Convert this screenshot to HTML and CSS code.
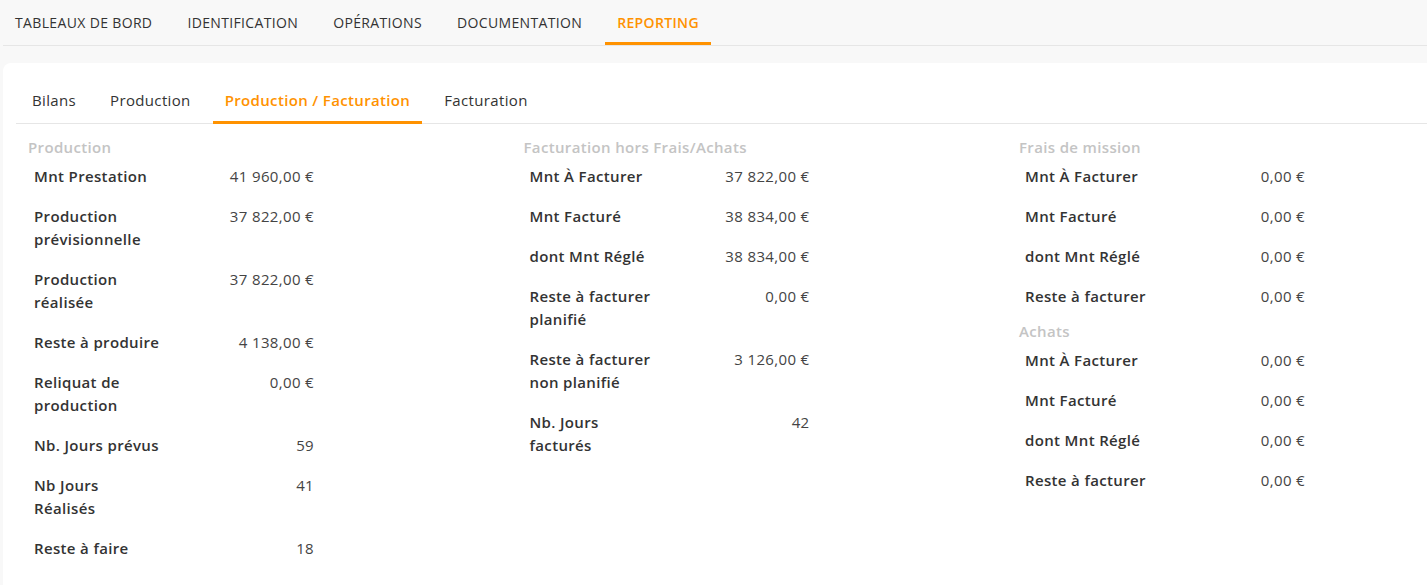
FILE: index.html
```html
<!DOCTYPE html>
<html lang="fr">
<head>
<meta charset="utf-8">
<title>Reporting</title>
<link rel="stylesheet" href="styles.css">
</head>
<body>
<nav class="topnav">
  <a class="topnav-item">TABLEAUX DE BORD</a>
  <a class="topnav-item">IDENTIFICATION</a>
  <a class="topnav-item">OPÉRATIONS</a>
  <a class="topnav-item">DOCUMENTATION</a>
  <a class="topnav-item active">REPORTING</a>
</nav>
<main class="card">
  <div class="tabs">
    <a class="tab">Bilans</a>
    <a class="tab">Production</a>
    <a class="tab active">Production / Facturation</a>
    <a class="tab">Facturation</a>
  </div>
  <div class="columns">
    <section class="col">
      <h3 class="col-title">Production</h3>
      <div class="row"><span class="label">Mnt Prestation</span><span class="value">41 960,00 €</span></div>
      <div class="row"><span class="label">Production prévisionnelle</span><span class="value">37 822,00 €</span></div>
      <div class="row"><span class="label">Production réalisée</span><span class="value">37 822,00 €</span></div>
      <div class="row"><span class="label">Reste à produire</span><span class="value">4 138,00 €</span></div>
      <div class="row"><span class="label">Reliquat de production</span><span class="value">0,00 €</span></div>
      <div class="row"><span class="label">Nb. Jours prévus</span><span class="value">59</span></div>
      <div class="row"><span class="label">Nb Jours Réalisés</span><span class="value">41</span></div>
      <div class="row"><span class="label">Reste à faire</span><span class="value">18</span></div>
    </section>
    <section class="col">
      <h3 class="col-title">Facturation hors Frais/Achats</h3>
      <div class="row"><span class="label">Mnt À Facturer</span><span class="value">37 822,00 €</span></div>
      <div class="row"><span class="label">Mnt Facturé</span><span class="value">38 834,00 €</span></div>
      <div class="row"><span class="label">dont Mnt Réglé</span><span class="value">38 834,00 €</span></div>
      <div class="row"><span class="label">Reste à facturer planifié</span><span class="value">0,00 €</span></div>
      <div class="row"><span class="label">Reste à facturer non planifié</span><span class="value">3 126,00 €</span></div>
      <div class="row"><span class="label">Nb. Jours facturés</span><span class="value">42</span></div>
    </section>
    <section class="col">
      <h3 class="col-title">Frais de mission</h3>
      <div class="row"><span class="label">Mnt À Facturer</span><span class="value">0,00 €</span></div>
      <div class="row"><span class="label">Mnt Facturé</span><span class="value">0,00 €</span></div>
      <div class="row"><span class="label">dont Mnt Réglé</span><span class="value">0,00 €</span></div>
      <div class="row"><span class="label">Reste à facturer</span><span class="value">0,00 €</span></div>
      <h3 class="col-title sub">Achats</h3>
      <div class="row"><span class="label">Mnt À Facturer</span><span class="value">0,00 €</span></div>
      <div class="row"><span class="label">Mnt Facturé</span><span class="value">0,00 €</span></div>
      <div class="row"><span class="label">dont Mnt Réglé</span><span class="value">0,00 €</span></div>
      <div class="row"><span class="label">Reste à facturer</span><span class="value">0,00 €</span></div>
    </section>
  </div>
</main>
</body>
</html>
```
FILE: styles.css
```css
* { box-sizing: border-box; }
html, body {
  margin: 0;
  padding: 0;
  background: #f8f8f8;
  font-family: "Open Sans", "Liberation Sans", sans-serif;
  color: #333;
  letter-spacing: 0.35px;
  overflow: hidden;
  height: 585px;
}
.topnav {
  display: flex;
  gap: 11px;
  height: 46px;
  margin-left: 3px;
  border-bottom: 1px solid #e6e6e6;
}
.topnav-item {
  display: flex;
  align-items: center;
  padding: 2px 12px 0;
  height: 45px;
  font-size: 14px;
  color: #333;
  border-bottom: 3px solid transparent;
  white-space: nowrap;
}
.topnav-item.active {
  color: #ff9200;
  font-weight: 600;
  border-bottom-color: #ff9200;
}
.card {
  margin: 17px 0 0 3px;
  height: 522px;
  background: #fff;
  border-radius: 8px 0 0 0;
  padding: 15px 0 0 13px;
  overflow: hidden;
}
.tabs {
  display: flex;
  gap: 10px;
  padding-left: 4px;
  height: 46px;
  border-bottom: 1px solid #e6e6e6;
}
.tab {
  display: flex;
  align-items: center;
  padding: 1px 12px 0;
  height: 46px;
  font-size: 15px;
  color: #333;
  border-bottom: 3px solid transparent;
  white-space: nowrap;
}
.tab.active {
  color: #ff9200;
  font-weight: 600;
  border-bottom-color: #ff9200;
}
.columns {
  display: grid;
  grid-template-columns: repeat(3, 495.5px);
  padding: 12px 0 0 12px;
}
.col-title {
  margin: 0 0 6px;
  font-size: 15px;
  line-height: 23px;
  font-weight: 600;
  color: #c4c4c4;
}
.col-title.sub {
  margin-top: -5px;
}
.row {
  display: flex;
  width: 286px;
  padding-left: 6px;
  margin-bottom: 17px;
  font-size: 15px;
  line-height: 23px;
}
.label {
  width: 128px;
  font-weight: 600;
  color: #333;
}
.value {
  flex: 1;
  text-align: right;
  color: #444;
}
```
